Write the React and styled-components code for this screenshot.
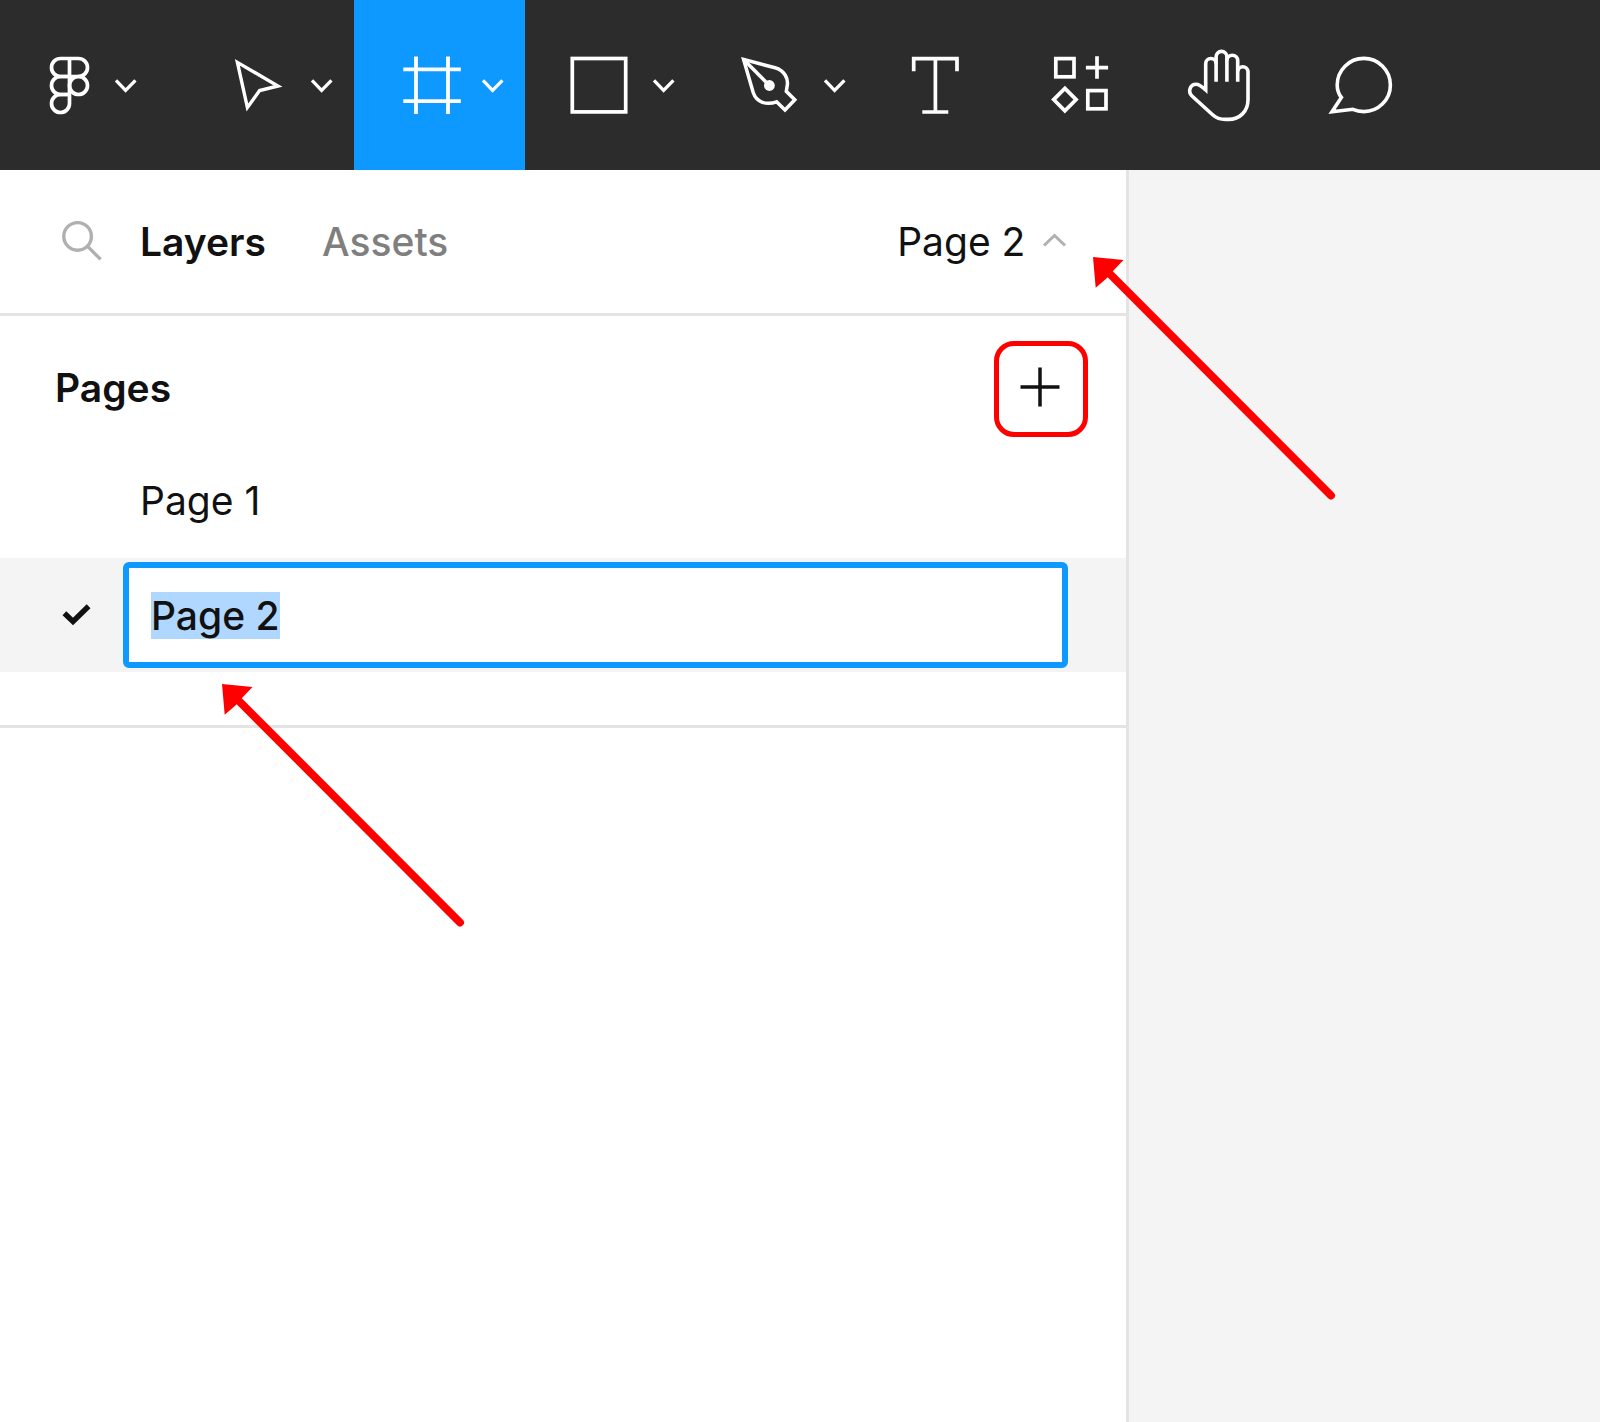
import React, { useEffect, useRef, useState } from "react";
import styled, { createGlobalStyle, css } from "styled-components";

const color = {
  toolbar: "#2c2c2c",
  accent: "#0d99ff",
  canvas: "#f4f4f4",
  row: "#f4f4f4",
  line: "#e4e4e4",
  text: "#111111",
  muted: "#7f7f7f",
  faint: "#b0b0b0",
  callout: "#ff0000",
};

const GlobalStyle = createGlobalStyle`
  *, *::before, *::after { box-sizing: border-box; }
  body {
    margin: 0;
    color: ${color.text};
    font-family: Inter, "Liberation Sans", sans-serif;
    font-size: 39px;
    line-height: 48px;
  }
`;

const Page = styled.div`
  display: flex;
  flex-direction: column;
  min-height: 100vh;
`;

const Toolbar = styled.nav`
  display: flex;
  height: 170px;
  flex: none;
  background: ${color.toolbar};
`;

const bareButton = css`
  border: 0;
  margin: 0;
  background: none;
  color: inherit;
  font: inherit;
  cursor: pointer;
`;

const Tool = styled.button`
  ${bareButton}
  display: flex;
  align-items: center;
  flex: none;
  color: #ffffff;
  padding: 0 35px;
  background: ${(p) => (p.$active ? color.accent : "transparent")};
  ${(p) => p.$kind === "menu" && css`padding: 0 20px 0 42px; gap: 13px;`}
  ${(p) => p.$kind === "brand" && css`padding: 0 45px 0 34px; gap: 8px;`}
`;

const Drawing = styled.svg`
  display: block;
  flex: none;
  overflow: visible;
  fill: none;
  stroke: currentColor;
  stroke-width: ${(p) => p.$stroke || 4};
`;

const Workspace = styled.main`
  position: relative;
  flex: 1;
  display: grid;
  grid-template-columns: minmax(0, 12fr) minmax(0, 5fr);
`;

const Sidebar = styled.aside`
  background: #ffffff;
  border-right: 3px solid ${color.line};
`;

const Canvas = styled.section`
  background: ${color.canvas};
`;

const PanelHeader = styled.header`
  display: flex;
  align-items: center;
  height: 146px;
  padding: 0 58px 0 60px;
  border-bottom: 3px solid ${color.line};
`;

const IconButton = styled.button`
  ${bareButton}
  display: flex;
  padding: 0;
  margin-right: 36px;
  color: ${color.faint};
`;

const Tab = styled.button`
  ${bareButton}
  padding: 0;
  margin-right: 56px;
  font-weight: ${(p) => (p.$current ? 600 : 500)};
  color: ${(p) => (p.$current ? color.text : color.muted)};
`;

const PageSwitch = styled.button`
  ${bareButton}
  display: flex;
  align-items: center;
  gap: 15px;
  margin-left: auto;
  padding: 0;

  svg {
    color: ${color.faint};
  }
`;

const PagesSection = styled.section`
  padding-bottom: 53px;
  border-bottom: 3px solid ${color.line};
`;

const SectionHead = styled.div`
  display: flex;
  align-items: center;
  justify-content: space-between;
  height: 128px;
  padding: 18px 38px 0 55px;
`;

const SectionTitle = styled.h2`
  margin: 0;
  padding-bottom: 2px;
  font-size: 39px;
  line-height: 48px;
  font-weight: 600;
`;

const AddButton = styled.button`
  ${bareButton}
  display: flex;
  align-items: center;
  justify-content: center;
  width: 94px;
  height: 96px;
  padding: 0 0 4px;
  border: 5px solid ${color.callout};
  border-radius: 20px;
`;

const PageList = styled.ul`
  list-style: none;
  margin: 0;
  padding: 0;
`;

const PageRow = styled.li`
  display: flex;
  align-items: center;
  height: 114px;
  padding-right: 58px;
  background: ${(p) => (p.$selected ? color.row : "transparent")};
`;

const Gutter = styled.span`
  flex: none;
  width: 123px;
  padding-left: 62px;
`;

const PageName = styled.button`
  ${bareButton}
  flex: 1;
  padding: 0 17px;
  text-align: left;
`;

const NameInput = styled.input`
  flex: 1;
  min-width: 0;
  height: 106px;
  padding: 0 22px;
  border: 6px solid ${color.accent};
  border-radius: 6px;
  outline: none;
  background: #ffffff;
  color: ${color.text};
  font: inherit;
  font-weight: 500;

  &::selection {
    background: #b0d7ff;
    color: ${color.text};
  }
`;

const Callout = styled.svg`
  position: absolute;
  left: ${(p) => p.$left}px;
  top: ${(p) => p.$top}px;
  overflow: visible;
  pointer-events: none;
`;

function Arrow({ left, top }) {
  return (
    <Callout $left={left} $top={top} width="242" height="242" aria-hidden="true">
      <path d="M0 0L30.5 3L20 14L14 21L2.7 30.7Z" fill={color.callout} />
      <path d="M14 14L238 238.5" stroke={color.callout} strokeWidth="8" strokeLinecap="round" />
    </Callout>
  );
}

function Glyph({ stroke, children }) {
  return (
    <Drawing width="72" height="72" viewBox="0 0 72 72" $stroke={stroke} aria-hidden="true">
      {children}
    </Drawing>
  );
}

function Chevron() {
  return (
    <Drawing width="24" height="24" viewBox="0 0 24 24" $stroke={3.3} aria-hidden="true">
      <path d="M2 7.4L11.6 17.4L21.4 7.4" />
    </Drawing>
  );
}

const tools = [
  {
    label: "Main menu",
    kind: "brand",
    stroke: 3.7,
    art: (
      <>
        <path d="M26.5 9.5H44.5a9 9 0 0 1 0 18H26.5a9 9 0 0 1 0-18z" />
        <path d="M35.5 27.5H26.5a9 9 0 0 0 0 18H35.5" />
        <circle cx="44.5" cy="36.5" r="9" />
        <path d="M35.5 45.5H26.5a9 9 0 1 0 9 9V9.5" />
      </>
    ),
  },
  {
    label: "Move",
    kind: "menu",
    stroke: 3.4,
    art: <path d="M12.4 13.4L53 37L34.6 41.6L22.4 58.5Z" />,
  },
  {
    label: "Frame",
    kind: "menu",
    active: true,
    stroke: 3.8,
    art: <path d="M20 7.5V65M52 7.5V65M7.3 20.3H64.8M7.3 52.2H64.8" />,
  },
  {
    label: "Rectangle",
    kind: "menu",
    stroke: 3.7,
    art: <rect x="5.3" y="9.5" width="53.4" height="53.4" />,
  },
  {
    label: "Pen",
    kind: "menu",
    stroke: 3.5,
    art: (
      <>
        <path d="M5.6 10.4L37 18.8C46.5 21.5 51 29.5 49 38L48.3 42.3L56.8 50.8L47 61L38.6 52.8C28.5 56.5 18.5 53.5 15.2 43.5Z" />
        <path d="M5.6 10.4L31.3 36.5" />
        <circle cx="31.4" cy="36.5" r="5.4" fill="currentColor" stroke="none" />
      </>
    ),
  },
  {
    label: "Text",
    stroke: 3.7,
    art: <path d="M11.7 22.3V9.6H55V22.3M33.4 9.6V63M20.3 63H46.3" />,
  },
  {
    label: "Resources",
    stroke: 3.7,
    art: (
      <>
        <rect x="11.8" y="9.6" width="18.2" height="18.2" />
        <path d="M53 7.3V29.8M41.9 18.6H64.1" />
        <path d="M20.9 39.4L32.1 50.6L20.9 61.8L9.7 50.6Z" />
        <rect x="43.8" y="41.6" width="18.2" height="18.2" />
      </>
    ),
  },
  {
    label: "Hand",
    stroke: 3.6,
    art: (
      <>
        <path d="M30.1 14.7a5.2 5.2 0 0 0-10.4 0V41C16.4 38.2 13.9 35.2 10.2 35.2C4.2 35.2 1.4 42.2 6 47L26.9 66C30.4 69.2 34.4 70.4 39.4 70.4H42.4C53.9 70.4 62 62.2 62 50.7V22.2a5.2 5.2 0 0 0-10.3 0" />
        <path d="M30.1 32.8V7.8a5.4 5.4 0 0 1 10.8 0V32.8" />
        <path d="M40.9 11.6a5.4 5.4 0 0 1 10.8 0V32.8" />
      </>
    ),
  },
  {
    label: "Comment",
    stroke: 3.6,
    art: <path d="M4 62.8L13.4 48.4C10.4 44.8 9.2 40.4 9.2 36A26.6 26.6 0 1 1 35.8 62.6C31.8 62.6 28.2 61.8 24.9 60.3Z" />,
  },
];

export default function App() {
  const [name, setName] = useState("Page 2");
  const input = useRef(null);

  useEffect(() => {
    input.current.focus();
    input.current.select();
  }, []);

  return (
    <Page>
      <GlobalStyle />
      <Toolbar aria-label="Tools">
        {tools.map((t) => (
          <Tool key={t.label} type="button" aria-label={t.label} $kind={t.kind} $active={t.active}>
            <Glyph stroke={t.stroke}>{t.art}</Glyph>
            {t.kind && <Chevron />}
          </Tool>
        ))}
      </Toolbar>
      <Workspace>
        <Sidebar>
          <PanelHeader>
            <IconButton type="button" aria-label="Search">
              <Drawing width="44" height="44" viewBox="0 0 44 44" $stroke={3.4} aria-hidden="true">
                <circle cx="17.6" cy="16.4" r="13.8" />
                <path d="M27.6 26.4L40.6 39.4" />
              </Drawing>
            </IconButton>
            <Tab type="button" $current>Layers</Tab>
            <Tab type="button">Assets</Tab>
            <PageSwitch type="button">
              Page 2
              <Drawing width="28" height="24" viewBox="0 0 28 24" $stroke={3} aria-hidden="true">
                <path d="M4 15.5L14.5 5.5L25 15.5" />
              </Drawing>
            </PageSwitch>
          </PanelHeader>
          <PagesSection>
            <SectionHead>
              <SectionTitle>Pages</SectionTitle>
              <AddButton type="button" aria-label="Add page">
                <Drawing width="40" height="40" viewBox="0 0 40 40" $stroke={3.5} aria-hidden="true">
                  <path d="M19 0.5V39.5M-0.5 20H38.5" />
                </Drawing>
              </AddButton>
            </SectionHead>
            <PageList>
              <PageRow>
                <Gutter />
                <PageName type="button">Page 1</PageName>
              </PageRow>
              <PageRow $selected>
                <Gutter>
                  <Drawing width="28" height="24" viewBox="0 0 28 24" $stroke={5.4} aria-hidden="true">
                    <path d="M2.4 10.2L11 18.4L26.6 3.2" />
                  </Drawing>
                </Gutter>
                <NameInput
                  ref={input}
                  aria-label="Page name"
                  value={name}
                  onChange={(e) => setName(e.target.value)}
                />
              </PageRow>
            </PageList>
          </PagesSection>
        </Sidebar>
        <Canvas aria-label="Canvas" />
        <Arrow left={1093} top={87} />
        <Arrow left={222} top={514} />
      </Workspace>
    </Page>
  );
}
